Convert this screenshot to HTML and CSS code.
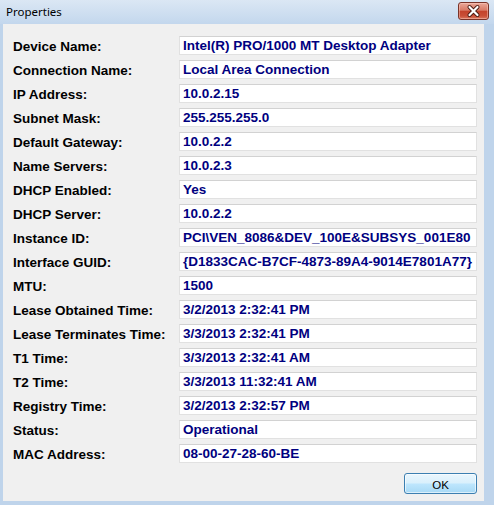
FILE: index.html
```html
<!DOCTYPE html>
<html>
<head>
<meta charset="utf-8">
<title>Properties</title>
<link rel="stylesheet" href="styles.css">
</head>
<body>
<div class="window">
  <div class="titlebar">
    <span class="title">Properties</span>
    <div class="close" aria-label="Close">
      <svg width="31" height="18" viewBox="0 0 31 18">
        <path d="M11.5 5 L19.5 13 M19.5 5 L11.5 13" stroke="#4a1a12" stroke-width="4" stroke-linecap="round" fill="none"/>
        <path d="M11.5 5 L19.5 13 M19.5 5 L11.5 13" stroke="#ffffff" stroke-width="2.2" stroke-linecap="round" fill="none"/>
      </svg>
    </div>
  </div>
  <div class="frame">
    <div class="client">
      <div class="grid">
        <div class="label">Device Name:</div><div class="value">Intel(R) PRO/1000 MT Desktop Adapter</div>
        <div class="label">Connection Name:</div><div class="value">Local Area Connection</div>
        <div class="label">IP Address:</div><div class="value">10.0.2.15</div>
        <div class="label">Subnet Mask:</div><div class="value">255.255.255.0</div>
        <div class="label">Default Gateway:</div><div class="value">10.0.2.2</div>
        <div class="label">Name Servers:</div><div class="value">10.0.2.3</div>
        <div class="label">DHCP Enabled:</div><div class="value">Yes</div>
        <div class="label">DHCP Server:</div><div class="value">10.0.2.2</div>
        <div class="label">Instance ID:</div><div class="value">PCI\VEN_8086&amp;DEV_100E&amp;SUBSYS_001E80</div>
        <div class="label">Interface GUID:</div><div class="value">{D1833CAC-B7CF-4873-89A4-9014E7801A77}</div>
        <div class="label">MTU:</div><div class="value">1500</div>
        <div class="label">Lease Obtained Time:</div><div class="value">3/2/2013 2:32:41 PM</div>
        <div class="label">Lease Terminates Time:</div><div class="value">3/3/2013 2:32:41 PM</div>
        <div class="label">T1 Time:</div><div class="value">3/3/2013 2:32:41 AM</div>
        <div class="label">T2 Time:</div><div class="value">3/3/2013 11:32:41 AM</div>
        <div class="label">Registry Time:</div><div class="value">3/2/2013 2:32:57 PM</div>
        <div class="label">Status:</div><div class="value">Operational</div>
        <div class="label">MAC Address:</div><div class="value">08-00-27-28-60-BE</div>
      </div>
      <div class="actions">
        <button class="ok">OK</button>
      </div>
    </div>
  </div>
</div>
</body>
</html>
```
FILE: styles.css
```css
html, body {
  margin: 0;
  padding: 0;
}
body {
  width: 494px;
  height: 505px;
  overflow: hidden;
  background: #bfd4eb;
  font-family: "Liberation Sans", Arial, sans-serif;
}
.window {
  width: 494px;
  height: 505px;
  display: flex;
  flex-direction: column;
  background: #bfd4eb;
}
.titlebar {
  height: 24px;
  flex: none;
  display: flex;
  justify-content: space-between;
  align-items: flex-start;
  padding: 0 5px 0 6px;
  background: linear-gradient(#dbe7f4, #c3d7ed);
}
.title {
  font-family: "Noto Sans", "Open Sans", sans-serif;
  font-size: 11.5px;
  line-height: 14px;
  margin-top: 5px;
  color: #000;
}
.close {
  margin-top: 2px;
  width: 31px;
  height: 18px;
  box-sizing: border-box;
  border: 1px solid #7a3328;
  border-radius: 3px;
  background: linear-gradient(#eaa899 0%, #d87a66 45%, #c4432c 52%, #c94f37 80%, #d9775e 100%);
  box-shadow: inset 0 0 0 1px rgba(255, 210, 200, 0.45);
  display: flex;
  align-items: center;
  justify-content: center;
}
.close svg {
  display: block;
  margin: -1px;
}
.frame {
  flex: 1;
  display: flex;
  padding: 0 10px 4px 3px;
}
.client {
  flex: 1;
  background: #f0f0f0;
  padding: 12px 7px 0 10px;
}
.grid {
  display: grid;
  grid-template-columns: 166px 298px;
  grid-auto-rows: 19px;
  row-gap: 5px;
}
.label {
  font-weight: bold;
  font-size: 13.5px;
  line-height: 17px;
  padding-top: 2px;
  color: #000;
  white-space: nowrap;
}
.value {
  box-sizing: border-box;
  border: 1px solid #e1e1e1;
  border-top-color: #d2d2d2;
  background: #fff;
  color: #000080;
  font-weight: bold;
  font-size: 13.5px;
  line-height: 17px;
  padding: 0 2px 0 3px;
  white-space: nowrap;
  overflow: hidden;
}
.actions {
  display: flex;
  justify-content: flex-end;
  margin-top: 10px;
}
.ok {
  width: 73px;
  height: 21px;
  box-sizing: border-box;
  border: 1px solid #3c7fb1;
  border-radius: 3px;
  background: linear-gradient(#eaf6fd 0%, #d9f0fc 48%, #bee6fd 52%, #a7d9f5 100%);
  box-shadow: inset 0 0 0 1px rgba(255, 255, 255, 0.6);
  font-family: "Liberation Sans", Arial, sans-serif;
  font-size: 11.5px;
  color: #000;
  padding: 2px 0 0 0;
  margin: 0;
}
```
